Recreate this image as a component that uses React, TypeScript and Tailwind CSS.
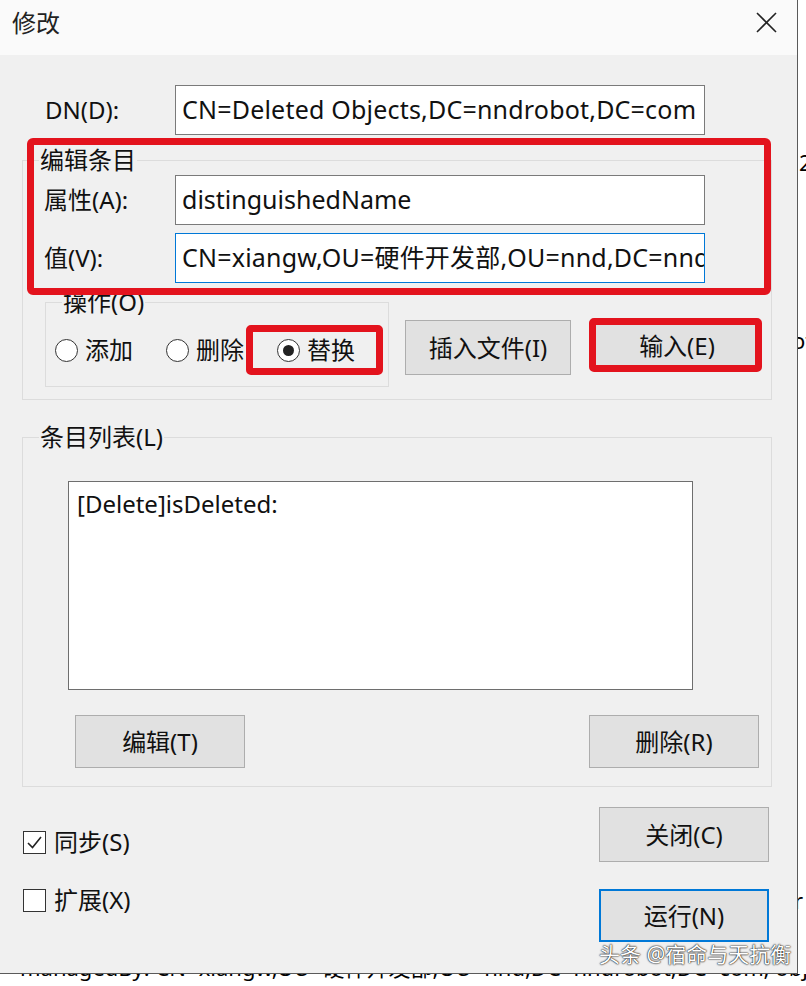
import React from "react";

function Radio({ label, checked }: { label: string; checked?: boolean }) {
  return (
    <div className="w-[111px] flex items-center">
      <div className="w-[23px] h-[23px] rounded-full border-[1.5px] border-[#333] bg-white flex items-center justify-center">
        {checked && <div className="w-[11px] h-[11px] rounded-full bg-[#222]" />}
      </div>
      <span className="ml-[7px] text-[24px] leading-[24px]">{label}</span>
    </div>
  );
}

function Btn({ label, className }: { label: string; className: string }) {
  return (
    <div
      className={
        "flex items-center justify-center bg-[#e1e1e1] text-[24px] leading-[24px] " + className
      }
    >
      {label}
    </div>
  );
}

function Check({ label, checked }: { label: string; checked?: boolean }) {
  return (
    <div className="h-[24px] flex items-center">
      <div className="w-[23px] h-[23px] border border-[#333] bg-white flex items-center justify-center">
        {checked && (
          <svg width="19" height="19" viewBox="0 0 19 19">
            <polyline points="3,10 7.5,14.5 16,4" fill="none" stroke="#222" strokeWidth="1.6" />
          </svg>
        )}
      </div>
      <span className="ml-[8px] text-[24px] leading-[24px]">{label}</span>
    </div>
  );
}

export default function App() {
  return (
    <div className="relative w-[806px] h-[986px] bg-white overflow-hidden text-[#111] font-['Noto_Sans','Noto_Sans_CJK_SC',sans-serif]">
      <div className="flex">
        <div className="w-[798px] h-[974px] border-r border-b border-[#5a5a5a] flex flex-col bg-[#f0f0f0]">
          {/* title bar */}
          <div className="h-[55px] bg-[#fafafa] flex items-center justify-between pl-[12px] pr-[20px] pb-[10px]">
            <span className="text-[24px] leading-[24px] text-[#222]">修改</span>
            <svg width="21" height="21" viewBox="0 0 21 21">
              <line x1="1" y1="1" x2="20" y2="20" stroke="#222" strokeWidth="1.6" />
              <line x1="20" y1="1" x2="1" y2="20" stroke="#222" strokeWidth="1.6" />
            </svg>
          </div>

          {/* body */}
          <div className="flex flex-col">
            <div className="mt-[30px] flex items-center h-[50px]">
              <span className="w-[175px] pl-[45px] text-[24px] leading-[24px]">DN(D):</span>
              <div className="w-[530px] h-[50px] border border-[#7a7a7a] bg-white px-[6px] text-[25px] tracking-[0.2px] flex items-center whitespace-nowrap overflow-hidden">
                CN=Deleted Objects,DC=nndrobot,DC=com
              </div>
            </div>

            <fieldset className="mt-[13px] ml-[22px] w-[750px] border border-[#dcdcdc] pb-[12px]">
              <legend className="ml-[16px] px-[1px] text-[24px] leading-[24px]">编辑条目</legend>
              <div className="mt-[3px] flex items-center">
                <span className="w-[152px] pl-[21px] text-[24px] leading-[24px]">属性(A):</span>
                <div className="w-[530px] h-[50px] border border-[#7a7a7a] bg-white px-[6px] text-[25px] flex items-center whitespace-nowrap overflow-hidden">
                  distinguishedName
                </div>
              </div>
              <div className="mt-[8px] flex items-center">
                <span className="w-[152px] pl-[21px] text-[24px] leading-[24px]">值(V):</span>
                <div className="w-[530px] h-[50px] border border-[#0078d7] bg-white px-[6px] text-[25px] tracking-[0.2px] flex items-center whitespace-nowrap overflow-hidden">
                  <span>CN</span>
                  <span className="inline-block w-[1.5px] h-[28px] bg-black" />
                  <span>=xiangw,OU=硬件开发部,OU=nnd,DC=nndrobot,DC=com</span>
                </div>
              </div>
              <div className="mt-[7px] flex items-start">
                <fieldset className="ml-[22px] w-[342px] border border-[#dcdcdc] pb-[24px]">
                  <legend className="ml-[16px] px-[1px] text-[24px] leading-[24px]">操作(O)</legend>
                  <div className="mt-[24px] pl-[9px] flex items-center">
                    <Radio label="添加" />
                    <Radio label="删除" />
                    <Radio label="替换" checked />
                  </div>
                </fieldset>
                <Btn label="插入文件(I)" className="ml-[16px] mt-[30px] w-[166px] h-[55px] border border-[#adadad]" />
                <Btn label="输入(E)" className="ml-[24px] mt-[31px] w-[164px] h-[50px] border border-[#adadad]" />
              </div>
            </fieldset>

            <fieldset className="mt-[25px] ml-[22px] w-[750px] border border-[#dcdcdc] pb-[18px]">
              <legend className="ml-[16px] px-[1px] text-[24px] leading-[24px]">条目列表(L)</legend>
              <div className="mt-[32px] ml-[45px] w-[625px] h-[209px] border border-[#6e6e6e] bg-white pl-[8px] pt-[7px]">
                <div className="text-[24px] leading-[30px]">[Delete]isDeleted:</div>
              </div>
              <div className="mt-[25px] pl-[52px] pr-[12px] flex justify-between">
                <Btn label="编辑(T)" className="w-[170px] h-[53px] border border-[#adadad]" />
                <Btn label="删除(R)" className="w-[170px] h-[53px] border border-[#adadad]" />
              </div>
            </fieldset>

            <div className="flex justify-between">
              <div className="pl-[23px] mt-[43px] flex flex-col">
                <Check label="同步(S)" checked />
                <div className="mt-[34px]">
                  <Check label="扩展(X)" />
                </div>
              </div>
              <div className="mr-[28px] mt-[20px] flex flex-col">
                <Btn label="关闭(C)" className="w-[170px] h-[55px] border border-[#adadad]" />
                <Btn label="运行(N)" className="mt-[27px] w-[170px] h-[53px] border-2 border-[#0078d7]" />
              </div>
            </div>
          </div>
        </div>

        {/* background window fragments on the right */}
        <div className="w-[8px] flex flex-col overflow-hidden text-[22px] leading-[24px] text-black">
          <span className="mt-[150px] pl-[1px]">2</span>
          <span className="mt-[154px] -ml-[6px] whitespace-nowrap">ot</span>
          <span className="mt-[536px] -ml-[4px] whitespace-nowrap">r</span>
        </div>
      </div>

      {/* background window text cut off at the bottom: only descenders show */}
      <div className="h-[12px] overflow-hidden pl-[20px]">
        <div className="-mt-[8px] text-[22px] leading-[2px] whitespace-nowrap text-black">
          managedBy: CN=xiangw,OU=硬件开发部,OU=nnd,DC=nndrobot,DC=com; objectGUID: 1a2b
        </div>
      </div>

      {/* annotations */}
      <div className="absolute left-[27px] top-[138px] w-[744px] h-[157px] border-[7px] border-[#e3131d] rounded-[6px]" />
      <div className="absolute left-[246px] top-[325px] w-[137px] h-[50px] border-[7px] border-[#e3131d] rounded-[5px]" />
      <div className="absolute left-[589px] top-[318px] w-[173px] h-[54px] border-[7px] border-[#e3131d] rounded-[5px]" />

      {/* watermark */}
      <div className="absolute left-[599px] top-[943px] text-[21px] leading-[22px] text-white whitespace-nowrap [text-shadow:0_0_2px_#000,0_0_1px_#000]">
        头条 @宿命与天抗衡
      </div>
    </div>
  );
}
